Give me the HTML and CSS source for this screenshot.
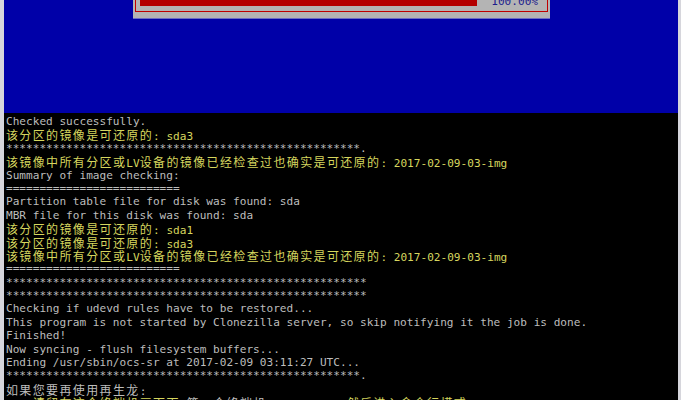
FILE: index.html
```html
<!DOCTYPE html>
<html lang="zh-CN">
<head>
    <meta charset="UTF-8">
    <meta name="viewport" content="width=device-width, initial-scale=1.0">
    <title>Clonezilla - ocs-sr</title>
    <link rel="stylesheet" href="styles.css">
</head>
<body>
    <div class="screen">
        <div class="backdrop">
            <div class="dialog">
                <div class="gauge">
                    <div class="bar"></div>
                    <span class="percent">100.00%</span>
                </div>
            </div>
        </div>

        <div class="terminal">
            <div class="line">Checked successfully.</div>
            <div class="line yellow"><span class="cjk">该分区的镜像是可还原的</span>: sda3</div>
            <div class="line">*****************************************************.</div>
            <div class="line yellow"><span class="cjk">该镜像中所有分区或</span>LV<span class="cjk">设备的镜像已经检查过也确实是可还原的</span>: 2017-02-09-03-img</div>
            <div class="line">Summary of image checking:</div>
            <div class="line">==========================</div>
            <div class="line">Partition table file for disk was found: sda</div>
            <div class="line">MBR file for this disk was found: sda</div>
            <div class="line yellow"><span class="cjk">该分区的镜像是可还原的</span>: sda1</div>
            <div class="line yellow"><span class="cjk">该分区的镜像是可还原的</span>: sda3</div>
            <div class="line yellow"><span class="cjk">该镜像中所有分区或</span>LV<span class="cjk">设备的镜像已经检查过也确实是可还原的</span>: 2017-02-09-03-img</div>
            <div class="line">==========================</div>
            <div class="line">******************************************************</div>
            <div class="line">******************************************************</div>
            <div class="line">Checking if udevd rules have to be restored...</div>
            <div class="line">This program is not started by Clonezilla server, so skip notifying it the job is done.</div>
            <div class="line">Finished!</div>
            <div class="line">Now syncing - flush filesystem buffers...</div>
            <div class="line">Ending /usr/sbin/ocs-sr at 2017-02-09 03:11:27 UTC...</div>
            <div class="line">*****************************************************.</div>
            <div class="line"><span class="cjk">如果您要再使用再生龙</span>:</div>
            <div class="line">(1) <span class="yellow cjk">请留在这个终端机画面下</span>(<span class="cjk">第一个终端机</span>/dev/tty1), <span class="yellow cjk">然后进入命令行模式</span></div>
        </div>
    </div>
</body>
</html>
```

FILE: styles.css
```css
body {
    margin: 0;
    background: #d6d6dc;
    font-family: "DejaVu Sans Mono", monospace;
}

.screen {
    margin: 0 3px 0 4px;
    height: 400px;
    overflow: hidden;
    background: #000;
}

/* whiptail gauge on the blue backdrop, top cut off by the screenshot */
.backdrop {
    height: 113px;
    padding-left: 129px;
    background: #0000a8;
}

.dialog {
    width: 413px;
    padding: 0 2px 6px;
    background: #b4b4b4;
    border-bottom: 1px solid #6c6cc4;
}

.gauge {
    height: 11px;
    display: flex;
    align-items: flex-end;
    justify-content: space-between;
    padding: 0 9px 0 4px;
    border: 1px solid #c00000;
    border-top: 0;
}

.bar {
    width: 337px;
    height: 6px;
    margin-bottom: 5px;
    background: #b40000;
}

.percent {
    margin-bottom: 3px;
    font-size: 11.1px;
    line-height: 13.4px;
    color: #1c1c8c;
}

/* console text */
.terminal {
    padding: 2px 0 0 2px;
    font-size: 11.1px;
    color: #bdbdbd;
}

.line {
    height: 13.4px;
    line-height: 13.4px;
    white-space: pre;
}

.yellow {
    color: #d6d65e;
}

/* one CJK glyph takes two console cells */
.cjk {
    font-family: "Noto Sans CJK SC", sans-serif;
    font-size: 12px;
    letter-spacing: 1.37px;
}
```
